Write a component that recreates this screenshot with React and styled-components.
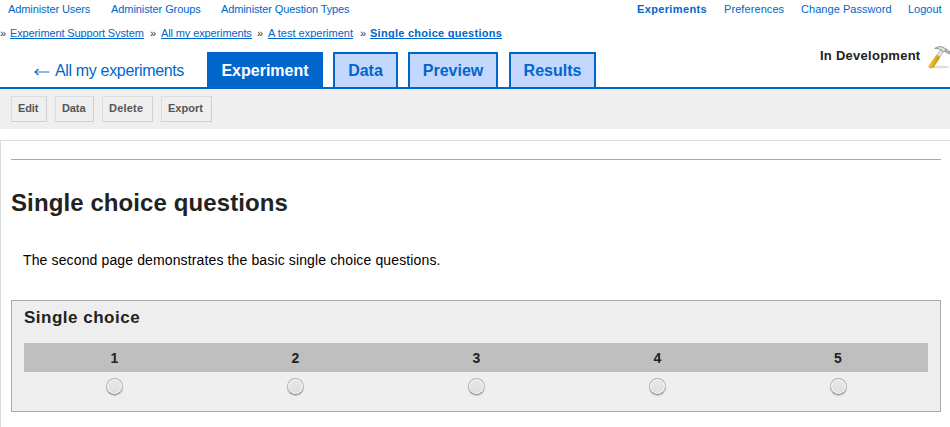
import React from "react";
import styled, { createGlobalStyle } from "styled-components";

const Global = createGlobalStyle`
  * { box-sizing: border-box; }
  html, body { margin: 0; overflow: hidden; }
  body { background: #fff; color: #222; font-family: "Liberation Sans", Arial, sans-serif; }
`;
const Page = styled.div`height: 427px; overflow: hidden; display: flex; flex-direction: column;`;
const TopBar = styled.nav`
  height: 20px; flex: none; display: flex; justify-content: space-between;
  padding: 0 9px 0 8px; font-size: 11px; line-height: 19px;
`;
const LinkGroup = styled.div`display: flex; gap: ${p => p.$gap}px;`;
const NavLink = styled.a`
  color: #0066cc; white-space: nowrap; width: ${p => p.$w}px;
  font-weight: ${p => (p.$bold ? 700 : 400)}; letter-spacing: ${p => p.$ls || 0}px;
`;
const Breadcrumbs = styled.nav`
  height: 32px; flex: none; display: flex; font-size: 11px; line-height: 27px;
`;
const Crumb = styled.div`display: flex; white-space: nowrap; width: ${p => p.$w}px;`;
const Separator = styled.span`width: ${p => p.$w}px; color: #333;`;
const CrumbLink = styled.a`
  color: #0066cc; height: 12px; margin-top: 7px; line-height: 13px; border-bottom: 1px solid #0066cc;
  width: ${p => p.$w}px; letter-spacing: ${p => p.$ls || 0}px; font-weight: ${p => (p.$bold ? 700 : 400)};
`;
const TabBar = styled.div`
  height: 37px; flex: none; display: flex; border-bottom: 2px solid #0066cc; padding-left: 34px;
`;
const BackLink = styled.a`
  width: 173px; display: flex; color: #0066cc; font-size: 16px; line-height: 37px; white-space: nowrap;
`;
const BackArrow = styled.svg`width: 16px; height: 9px; margin: 15px 5px 0 0; flex: none;`;
const BackText = styled.span`letter-spacing: -0.34px;`;
const Tab = styled.a`
  width: ${p => p.$w}px; height: 35px; margin-right: ${p => p.$gap}px;
  border: 2px solid #0066cc; border-bottom: 0; text-align: center;
  background: ${p => (p.$active ? "#0066cc" : "#c4d8ff")};
  color: ${p => (p.$active ? "#fff" : "#0066cc")};
  font-size: 16px; font-weight: 700; line-height: 33px;
`;
const Status = styled.div`
  margin-left: auto; display: flex; font-size: 13px; font-weight: 700; line-height: 7px; white-space: nowrap;
`;
const StatusText = styled.span`width: 108px; letter-spacing: 0.26px;`;
const Hammer = styled.svg`width: 22px; height: 24px; margin-top: -7px; flex: none; overflow: hidden;`;
const Toolbar = styled.div`
  height: 40px; flex: none; background: #efefef; padding: 7px 11px; display: flex; gap: 8px;
`;
const ToolButton = styled.a`
  width: ${p => p.$w}px; height: 26px; padding-left: 6px;
  border: 1px solid #ddd; border-right-color: #d0d0d0; border-bottom-color: #d0d0d0;
  color: #555; font-size: 11px; font-weight: 700; line-height: 23px;
  letter-spacing: ${p => p.$ls || 0}px;
`;
const Content = styled.main`
  flex: 1; margin-top: 11px; border: 1px solid #ddd; border-right: 0; border-bottom: 0; padding: 18px 9px 0 10px;
`;
const Rule = styled.div`height: 1px; background: #aaa;`;
const Title = styled.h1`
  margin: 28px 0 0; font-size: 24px; line-height: 30px; letter-spacing: 0.1px; color: #222;
`;
const Intro = styled.p`
  margin: 33px 0 0 12px; font-size: 14px; line-height: 18px; color: #000; letter-spacing: 0.13px; white-space: nowrap;
`;
const Question = styled.section`
  margin-top: 31px; height: 112px; border: 1px solid #aaa; background: #eee; padding: 6px 12px 0;
`;
const QuestionTitle = styled.h2`
  margin: 0 0 15px; font-size: 17px; line-height: 21px; letter-spacing: 0.5px; color: #222;
`;
const ChoiceGrid = styled.div`display: grid; grid-template-columns: repeat(4, 181px) 1fr; background: #efefef;`;
const ChoiceHead = styled.div`
  height: 29px; background: #bfbfbf; text-align: center; font-size: 14px; font-weight: 700; line-height: 30px;
`;
const ChoiceCell = styled.label`height: 33px; display: flex; justify-content: center; padding-top: 6px;`;
const Radio = styled.input`
  appearance: none; width: 17px; height: 17px; margin: 0; border-radius: 50%;
  border: 1px solid #b4b4b4; border-bottom-color: #8c8c8c;
  background: linear-gradient(#e9e8e7, #dfdedc);
  box-shadow: inset 0 0 0 1px #f8f8f8, 0 1px 1px rgba(0, 0, 0, 0.2);
`;

const adminLinks = [["Administer Users", 82, -0.1], ["Administer Groups", 89, -0.08], ["Administer Question Types", 130, -0.11]];
const userLinks = [["Experiments", 71, 0.36, true], ["Preferences", 61, 0.08], ["Change Password", 91, 0.05], ["Logout", 33, 0]];
const crumbs = [
  ["Experiment Support System", 150, 10, 134, -0.13],
  ["All my experiments", 107, 11, 91, -0.12],
  ["A test experiment", 103, 11, 85, 0],
  ["Single choice questions", 142, 10, 132, 0.27, true],
];
const tabs = [["Experiment", 116, 10, true], ["Data", 65, 10], ["Preview", 90, 11], ["Results", 87, 0]];
const tools = [["Edit", 36, -0.1], ["Data", 39, -0.1], ["Delete", 51, 0.2], ["Export", 51, 0]];

function HammerIcon() {
  return (
    <Hammer viewBox="0 0 22 24">
      <defs>
        <linearGradient id="handle" x1="0" y1="0" x2="1" y2="0.5">
          <stop offset="0" stopColor="#ffe477" />
          <stop offset="0.55" stopColor="#eeb818" />
          <stop offset="1" stopColor="#a97800" />
        </linearGradient>
      </defs>
      <ellipse cx="12" cy="22" rx="9" ry="1.3" fill="#ddd" />
      <path d="M8.6 10 12 12.3 5.4 22.4Q3.2 23.8 1 22.4L.8 21Z" fill="url(#handle)" stroke="#c69615" strokeWidth=".5" />
      <path d="M9 10 12.7 4.8 15.5 6.6 12 12Z" fill="#e2e2e2" stroke="#999" strokeWidth=".6" />
      <path d="M6.8 3.4Q10 .4 14.5 1.9L18 4.1 17.8 6 15.7 7.2 13 5.2Q10 2.9 6.8 3.4Z" fill="#ddd" stroke="#777" strokeWidth=".7" />
      <path d="M18 4 22 6.8 21 9.1 17.1 6.6Z" fill="#b5b5b5" stroke="#777" strokeWidth=".6" />
    </Hammer>
  );
}

export default function App() {
  return (
    <Page>
      <Global />
      <TopBar>
        <LinkGroup $gap={21}>
          {adminLinks.map(([t, w, ls]) => <NavLink key={t} $w={w} $ls={ls}>{t}</NavLink>)}
        </LinkGroup>
        <LinkGroup $gap={16}>
          {userLinks.map(([t, w, ls, b]) => <NavLink key={t} $w={w} $ls={ls} $bold={b}>{t}</NavLink>)}
        </LinkGroup>
      </TopBar>
      <Breadcrumbs>
        {crumbs.map(([t, w, sep, link, ls, b]) => (
          <Crumb key={t} $w={w}>
            <Separator $w={sep}>»</Separator>
            <CrumbLink $w={link} $ls={ls} $bold={b}>{t}</CrumbLink>
          </Crumb>
        ))}
      </Breadcrumbs>
      <TabBar>
        <BackLink>
          <BackArrow viewBox="0 0 16 9">
            <path d="M1 5H15.5" fill="none" stroke="#5c9cdd" strokeWidth="1.4" />
            <path d="M4.5 2 1 5l3.5 3" fill="none" stroke="#0066cc" strokeWidth="1.2" />
          </BackArrow>
          <BackText>All my experiments</BackText>
        </BackLink>
        {tabs.map(([t, w, gap, active]) => <Tab key={t} $w={w} $gap={gap} $active={active}>{t}</Tab>)}
        <Status>
          <StatusText>In Development</StatusText>
          <HammerIcon />
        </Status>
      </TabBar>
      <Toolbar>
        {tools.map(([t, w, ls]) => <ToolButton key={t} $w={w} $ls={ls}>{t}</ToolButton>)}
      </Toolbar>
      <Content>
        <Rule />
        <Title>Single choice questions</Title>
        <Intro>The second page demonstrates the basic single choice questions.</Intro>
        <Question>
          <QuestionTitle>Single choice</QuestionTitle>
          <ChoiceGrid>
            {[1, 2, 3, 4, 5].map(n => <ChoiceHead key={n}>{n}</ChoiceHead>)}
            {[1, 2, 3, 4, 5].map(n => <ChoiceCell key={n}><Radio type="radio" name="choice" /></ChoiceCell>)}
          </ChoiceGrid>
        </Question>
      </Content>
    </Page>
  );
}
